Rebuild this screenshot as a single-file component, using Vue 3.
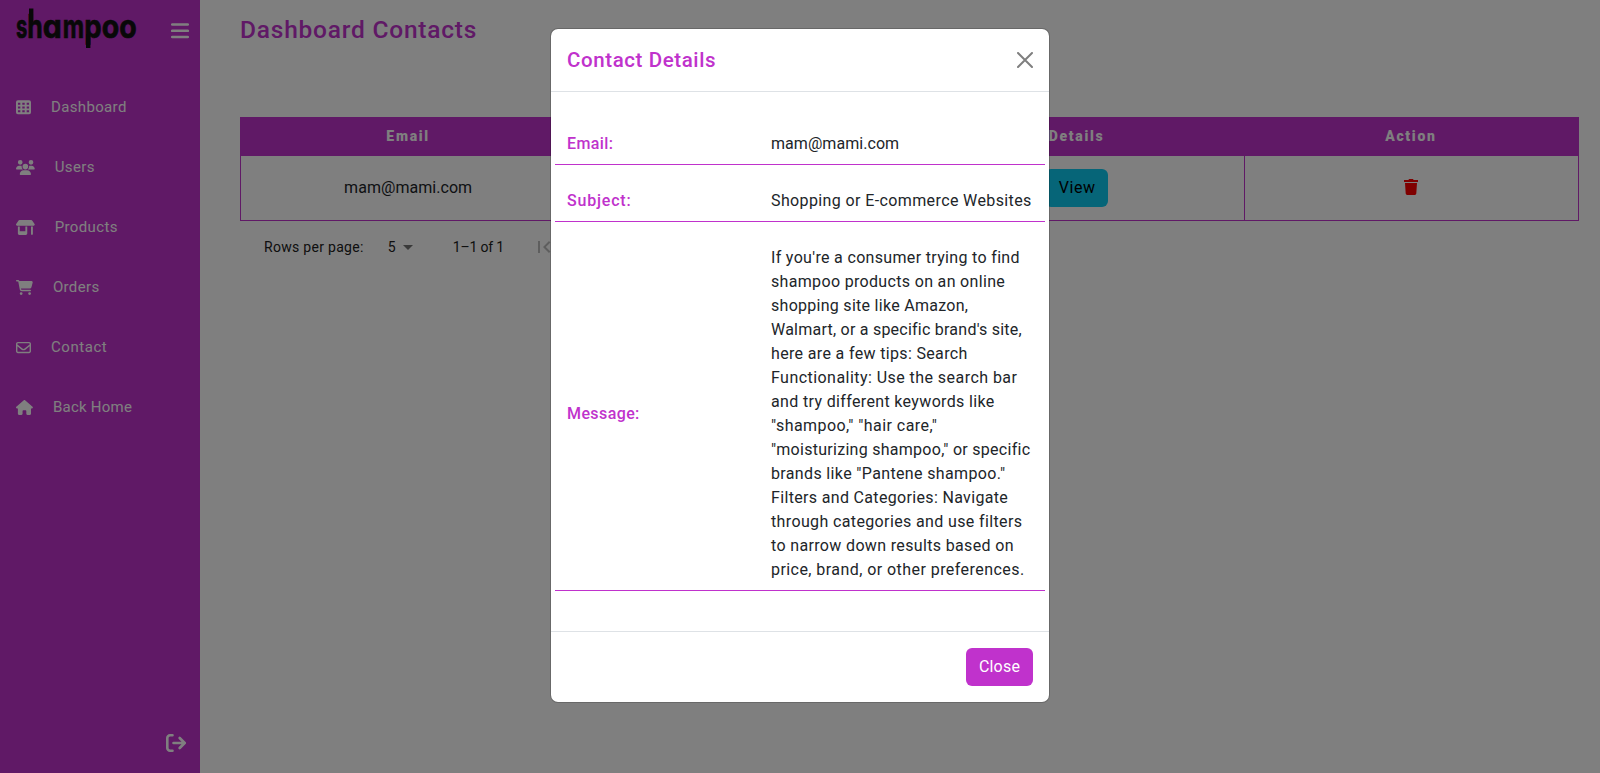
<script setup>
const icons = {
  users: 'M144 0a80 80 0 1 1 0 160A80 80 0 1 1 144 0zM512 0a80 80 0 1 1 0 160A80 80 0 1 1 512 0zM0 298.7C0 239.8 47.8 192 106.7 192l42.7 0c15.9 0 31 3.5 44.6 9.7c-1.3 7.2-1.9 14.7-1.9 22.3c0 38.2 16.8 72.5 43.3 96c-.2 0-.4 0-.7 0L21.3 320C9.6 320 0 310.4 0 298.7zM405.3 320c-.2 0-.4 0-.7 0c26.6-23.5 43.3-57.8 43.3-96c0-7.6-.7-15-1.9-22.3c13.6-6.3 28.7-9.7 44.6-9.7l42.7 0C592.2 192 640 239.8 640 298.7c0 11.8-9.6 21.3-21.3 21.3l-213.3 0zM224 224a96 96 0 1 1 192 0 96 96 0 1 1 -192 0zM128 485.3C128 411.7 187.7 352 261.3 352l117.3 0C452.3 352 512 411.7 512 485.3c0 14.7-11.9 26.7-26.7 26.7l-330.7 0c-14.7 0-26.7-11.9-26.7-26.7z',
  shop: 'M36.8 192l566.3 0c20.3 0 36.8-16.5 36.8-36.8c0-7.3-2.2-14.4-6.2-20.4L558.2 21.4C549.3 8 534.4 0 518.3 0L121.7 0c-16 0-31 8-39.9 21.4L6.2 134.7c-4 6.1-6.2 13.2-6.2 20.4C0 175.5 16.5 192 36.8 192zM64 224l0 160 0 80c0 26.5 21.5 48 48 48l224 0c26.5 0 48-21.5 48-48l0-80 0-160-64 0 0 160-192 0 0-160-64 0zm448 0l0 256c0 17.7 14.3 32 32 32s32-14.3 32-32l0-256-64 0z',
  cart: 'M0 24C0 10.7 10.7 0 24 0L69.5 0c22 0 41.5 12.8 50.6 32l411 0c26.3 0 45.5 25 38.6 50.4l-41 152.3c-8.5 31.4-37 53.3-69.5 53.3l-288.5 0 5.4 28.5c2.2 11.3 12.1 19.5 23.6 19.5L488 336c13.3 0 24 10.7 24 24s-10.7 24-24 24l-288.3 0c-34.6 0-64.3-24.6-70.7-58.5L77.4 54.5c-.7-3.8-4-6.5-7.9-6.5L24 48C10.7 48 0 37.3 0 24zM128 464a48 48 0 1 1 96 0 48 48 0 1 1 -96 0zm336-48a48 48 0 1 1 0 96 48 48 0 1 1 0-96z',
  mail: 'M64 112c-8.8 0-16 7.2-16 16l0 22.1L220.5 291.7c20.7 17 50.4 17 71.1 0L464 150.1l0-22.1c0-8.8-7.2-16-16-16L64 112zM48 212.2L48 384c0 8.8 7.2 16 16 16l384 0c8.8 0 16-7.2 16-16l0-171.8L322 328.8c-38.4 31.5-93.7 31.5-132 0L48 212.2zM0 128C0 92.7 28.7 64 64 64l384 0c35.3 0 64 28.7 64 64l0 256c0 35.3-28.7 64-64 64L64 448c-35.3 0-64-28.7-64-64L0 128z',
  home: 'M575.8 255.5c0 18-15 32.1-32 32.1l-32 0 .7 160.2c0 2.7-.2 5.4-.5 8.1l0 16.2c0 22.1-17.9 40-40 40l-16 0c-1.1 0-2.2 0-3.3-.1c-1.4 .1-2.8 .1-4.2 .1L416 512l-24 0c-22.1 0-40-17.9-40-40l0-24 0-64c0-17.7-14.3-32-32-32l-64 0c-17.7 0-32 14.3-32 32l0 64 0 24c0 22.1-17.9 40-40 40l-24 0-31.9 0c-1.5 0-3-.1-4.5-.2c-1.2 .1-2.4 .2-3.6 .2l-16 0c-22.1 0-40-17.9-40-40l0-112c0-.9 0-1.9 .1-2.8l0-69.7-32 0c-18 0-32-14-32-32.1c0-9 3-17 10-24L266.4 8c7-7 15-8 22-8s15 2 21 7L564.8 231.5c8 7 12 15 11 24z',
  grid: 'M64 12h384a64 64 0 0 1 64 64v344a64 64 0 0 1-64 64H64a64 64 0 0 1-64-64V76a64 64 0 0 1 64-64zM66 98v64h82V98zM215 98v64h82V98zM364 98v64h82V98zM66 226v64h82v-64zM215 226v64h82v-64zM364 226v64h82v-64zM66 354v64h82v-64zM215 354v64h82v-64zM364 354v64h82v-64z'
}
const nav = [
  { label: 'Dashboard', icon: 'grid', w: 512 },
  { label: 'Users', icon: 'users', w: 640 },
  { label: 'Products', icon: 'shop', w: 640 },
  { label: 'Orders', icon: 'cart', w: 576 },
  { label: 'Contact', icon: 'mail', w: 512 },
  { label: 'Back Home', icon: 'home', w: 576 }
]
// Start and advance of each wordmark letter.
const letters = [
  { c: 's', x: 0, w: 11.3 },
  { c: 'h', x: 11.3, w: 15.5 },
  { c: 'a', x: 26.8, w: 19 },
  { c: 'm', x: 46.8, w: 21.4 },
  { c: 'p', x: 68.2, w: 17.4 },
  { c: 'o', x: 85.7, w: 17.5 },
  { c: 'o', x: 103.2, w: 17.5 }
]
const message = [
  ["If you're a consumer trying to find", .33],
  ['shampoo products on an online', .33],
  ['shopping site like Amazon,', .28],
  ["Walmart, or a specific brand's site,", .235],
  ['here are a few tips: Search', .345],
  ['Functionality: Use the search bar', .45],
  ['and try different keywords like', .35],
  ['"shampoo," "hair care,"', .44],
  ['"moisturizing shampoo," or specific', .28],
  ['brands like "Pantene shampoo."', .355],
  ['Filters and Categories: Navigate', .335],
  ['through categories and use filters', .37],
  ['to narrow down results based on', .35],
  ['price, brand, or other preferences.', .44]
]
const details = [
  { label: 'Email:', track: .4, lines: [['mam@mami.com', .05]] },
  { label: 'Subject:', track: .8, lines: [['Shopping or E-commerce Websites', .385]] },
  { label: 'Message:', track: .4, lines: message }
]
</script>

<template>
  <div class="page">
    <aside class="sidebar">
      <div class="top">
        <svg class="logo" width="124" height="46" viewBox="0 0 124 46">
          <text y="30"><tspan v-for="(l, i) in letters" :key="i" :x="l.x" :textLength="l.w" lengthAdjust="spacingAndGlyphs">{{ l.c }}</tspan></text>
          <path d="M13 0.5h4.4v14H13zM70 26h4.4v14H70z" />
        </svg>
        <svg class="burger" width="18" height="16" viewBox="0 0 18 16">
          <path d="M1.2 1.5h15.6M1.2 7.8h15.6M1.2 14h15.6" fill="none" stroke="currentColor" stroke-width="2.6" stroke-linecap="round" />
        </svg>
      </div>
      <nav>
        <a v-for="n in nav" :key="n.label">
          <svg :width="n.w * 15 / 512" height="15" :viewBox="`0 0 ${n.w} 512`"><path :d="icons[n.icon]" fill="currentColor" fill-rule="evenodd" /></svg>
          <span>{{ n.label }}</span>
        </a>
      </nav>
      <svg class="logout" width="20" height="18" viewBox="0 0 20 18" fill="none" stroke="currentColor" stroke-width="2.6" stroke-linecap="round" stroke-linejoin="round">
        <path d="M6.5 1.3H4a2.7 2.7 0 0 0-2.7 2.7v10a2.7 2.7 0 0 0 2.7 2.7h2.5M7.5 9h11M13.7 4l5 5-5 5" />
      </svg>
    </aside>

    <main>
      <h1>Dashboard Contacts</h1>
      <div class="table">
        <div class="row head"><b>Email</b><b>Subject</b><b>Details</b><b>Action</b></div>
        <div class="row body">
          <span>mam@mami.com</span>
          <span></span>
          <span><button class="view">View</button></span>
          <span>
            <svg class="trash" width="14" height="16" viewBox="0 0 14 16"><path d="M0 1h4.3l.8-1h3.8l.8 1H14v2H0zM1 4h12l-.7 10.6A1.5 1.5 0 0 1 10.8 16H3.2a1.5 1.5 0 0 1-1.5-1.4z" fill="#f00" /></svg>
          </span>
        </div>
      </div>
      <div class="pager">
        <span class="rpp">Rows per page:</span>
        <span class="num">5</span>
        <svg class="caret" width="10" height="5" viewBox="0 0 10 5"><path d="M0 0h10L5 5z" fill="#757575" /></svg>
        <span class="range">1–1 of 1</span>
        <svg class="first" width="24" height="24" viewBox="0 0 24 24"><path d="M18.41 16.59L13.82 12l4.59-4.59L17 6l-6 6 6 6zM6 6h2v12H6z" fill="#bdbdbd" /></svg>
      </div>
    </main>

    <div class="overlay">
      <section class="modal">
        <header>
          <h2>Contact Details</h2>
          <svg width="16" height="16" viewBox="0 0 16 16"><path d="M1 1l14 14M15 1L1 15" stroke="#7f7f7f" stroke-width="2" stroke-linecap="round" /></svg>
        </header>
        <div class="content">
          <div v-for="d in details" :key="d.label" class="detail">
            <strong :style="{ letterSpacing: d.track + 'px' }">{{ d.label }}</strong>
            <div><p v-for="l in d.lines" :key="l[0]" :style="{ letterSpacing: l[1] + 'px' }">{{ l[0] }}</p></div>
          </div>
        </div>
        <footer><button class="close">Close</button></footer>
      </section>
    </div>
  </div>
</template>

<style>
body { margin: 0; overflow: hidden; }
</style>
<style scoped>
* { box-sizing: border-box; }
.page { position: relative; display: flex; width: 1600px; height: 773px; background: #fff; font: 400 16px/24px Roboto, "Liberation Sans", sans-serif; color: #212529; overflow: hidden; }
h1, h2, p { margin: 0; }
svg { display: block; flex: none; }
button { border: 0; font: inherit; }
.sidebar { display: flex; flex-direction: column; width: 200px; flex: none; background: #c032cc; color: #fff; }
.top { display: flex; justify-content: space-between; height: 77px; padding: 7.5px 11px 0 16px; }
.logo text { font: 700 33px Inter, sans-serif; font-feature-settings: "cv11"; stroke: #111; stroke-width: .7px; }
.logo { fill: #111; overflow: visible; }
.burger { margin-top: 15px; }
nav { flex: 1; }
nav a { display: flex; align-items: center; gap: 20px; height: 60px; padding-left: 16px; font-size: 15px; letter-spacing: .35px; }
nav a:nth-child(5) { letter-spacing: .55px; }
nav a:nth-child(6) { letter-spacing: .25px; }
.logout { margin: 0 0 21.5px 166px; }
main { flex: 1; padding: 12px 21px 0 40px; }
h1 { font-size: 24.5px; font-weight: 500; line-height: 36px; color: #c032cc; letter-spacing: .78px; }
.table { margin-top: 69px; border: 1px solid #c032cc; }
.row { display: grid; grid-template-columns: repeat(4, 1fr); }
.head { height: 38px; background: #c032cc; color: #fff; }
.row b, .row span { display: flex; align-items: center; justify-content: center; padding-bottom: 1px; }
.row b { font-weight: 900; font-size: 14px; letter-spacing: 1.7px; padding-bottom: 2px; }
.body { height: 64px; letter-spacing: .05px; }
.body span + span { border-left: 1px solid #c032cc; }
.view { width: 63px; height: 38px; margin-right: 2px; padding: 0 0 0 2px; border-radius: 6px; background: #0dcaf0; color: #000; letter-spacing: .6px; }
.trash { margin-bottom: 1px; }
.pager { display: flex; align-items: center; height: 52px; padding-left: 24px; font-size: 14px; letter-spacing: .3px; color: #212121; }
.num { margin-left: 24px; }
.caret { margin-left: 7px; }
.range { margin-left: 40px; letter-spacing: -.2px; }
.first { margin-left: 28px; }
.overlay { position: absolute; inset: 0; background: rgba(0, 0, 0, .5); display: flex; justify-content: center; align-items: flex-start; padding-top: 28px; }
.modal { width: 500px; border: 1px solid rgba(0, 0, 0, .175); border-radius: 8px; background: #fff; background-clip: padding-box; }
header { display: flex; align-items: center; justify-content: space-between; height: 63px; padding: 0 16px; border-bottom: 1px solid #dee2e6; }
h2 { font-size: 20.5px; font-weight: 500; color: #c032cc; letter-spacing: .6px; }
.content { padding: 16px 4px 40px; }
.detail { display: flex; align-items: center; padding: 24px 12px 8px; border-bottom: 1px solid #c032cc; }
.detail strong { width: 204px; flex: none; font-weight: 500; color: #c032cc; }
.detail p { white-space: nowrap; }
footer { display: flex; justify-content: flex-end; padding: 16px; border-top: 1px solid #dee2e6; }
.close { width: 67px; height: 38px; border-radius: 6px; background: #c032cc; color: #fff; padding: 0; letter-spacing: .2px; }
</style>
